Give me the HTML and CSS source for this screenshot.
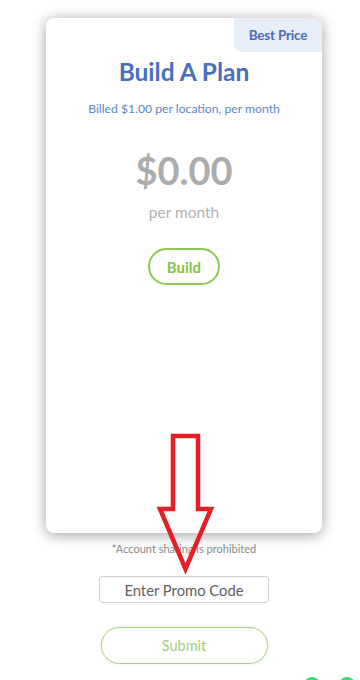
FILE: index.html
```html
<!DOCTYPE html>
<html>
<head>
<meta charset="utf-8">
<link rel="stylesheet" href="styles.css">
</head>
<body>
<div class="page">
  <div class="card">
    <div class="badge">Best Price</div>
    <h1 class="title">Build A Plan</h1>
    <p class="billed">Billed $1.00 per location, per month</p>
    <div class="price">$0.00</div>
    <div class="per">per month</div>
    <button class="build">Build</button>
  </div>
  <p class="note">*Account sharing is prohibited</p>
  <input class="promo" type="text" placeholder="Enter Promo Code">
  <button class="submit">Submit</button>
</div>
<svg class="arrow" width="72" height="150" viewBox="0 0 72 150">
  <polygon points="23,6 48,6 48,79 61,79 35.5,139 10,79 23,79" fill="#ffffff" fill-opacity="0" stroke="#e31e25" stroke-width="4.5" stroke-linejoin="miter"/>
</svg>
<div class="dots"><span class="dot"></span><span class="dot"></span></div>
</body>
</html>
```
FILE: styles.css
```css
* { box-sizing: border-box; }
html, body { margin: 0; padding: 0; background: #ffffff; }
body {
  font-family: Lato, "Open Sans", sans-serif;
  width: 360px;
  height: 680px;
  overflow: hidden;
  position: relative;
}
.page {
  width: 276px;
  margin-left: 46px;
  padding-top: 18px;
  display: flex;
  flex-direction: column;
  align-items: center;
}
.card {
  position: relative;
  width: 276px;
  height: 515px;
  background: #fff;
  border-radius: 8px;
  box-shadow: 0 2px 14px rgba(0,0,0,0.38);
  display: flex;
  flex-direction: column;
  align-items: center;
  padding-top: 39px;
}
.badge {
  position: absolute;
  top: 0;
  right: 0;
  width: 88px;
  height: 34px;
  background: #e8eef9;
  color: #4a6db5;
  font-weight: 700;
  font-size: 13.5px;
  display: flex;
  align-items: center;
  justify-content: center;
  border-radius: 0 8px 0 8px;
  letter-spacing: -0.2px;
}
.title {
  margin: 0;
  font-size: 24.5px;
  line-height: 30px;
  font-weight: 700;
  color: #4670bd;
}
.billed {
  margin: 14px 0 0;
  font-size: 12.2px;
  line-height: 16px;
  color: #5d86cc;
}
.price {
  margin-top: 30px;
  font-size: 38px;
  line-height: 46px;
  font-weight: 700;
  color: #acacac;
}
.per {
  margin-top: 9px;
  font-size: 15.5px;
  line-height: 20px;
  color: #b2b2b2;
}
.build {
  margin-top: 26px;
  width: 72px;
  height: 37px;
  border: 2px solid #8fcb52;
  border-radius: 19px;
  background: #fff;
  color: #86c443;
  font-family: Lato, sans-serif;
  font-weight: 700;
  font-size: 15px;
  padding: 0;
}
.note {
  margin: 9px 0 0;
  font-size: 11px;
  line-height: 14px;
  color: #8a8a8a;
}
.promo {
  margin-top: 20px;
  width: 170px;
  height: 27px;
  border: 1px solid #cfcfcf;
  border-radius: 3px;
  font-family: Lato, sans-serif;
  font-size: 14.8px;
  text-align: center;
  padding: 0;
  color: #555;
}
.promo::placeholder { color: #5f5f5f; opacity: 1; }
.submit {
  margin-top: 24px;
  width: 167px;
  height: 37px;
  border: 1px solid #a8d47f;
  border-radius: 19px;
  background: #fff;
  color: #a3d176;
  font-family: Lato, sans-serif;
  font-size: 14.5px;
  padding: 0;
  box-shadow: 0 0 3px rgba(140,200,90,0.25);
}
.arrow {
  position: absolute;
  left: 150px;
  top: 430px;
}
.dots {
  position: absolute;
  left: 304px;
  top: 677px;
  display: flex;
  gap: 19px;
}
.dot {
  width: 16px;
  height: 16px;
  border-radius: 50%;
  background: #3fd97a;
}
```
